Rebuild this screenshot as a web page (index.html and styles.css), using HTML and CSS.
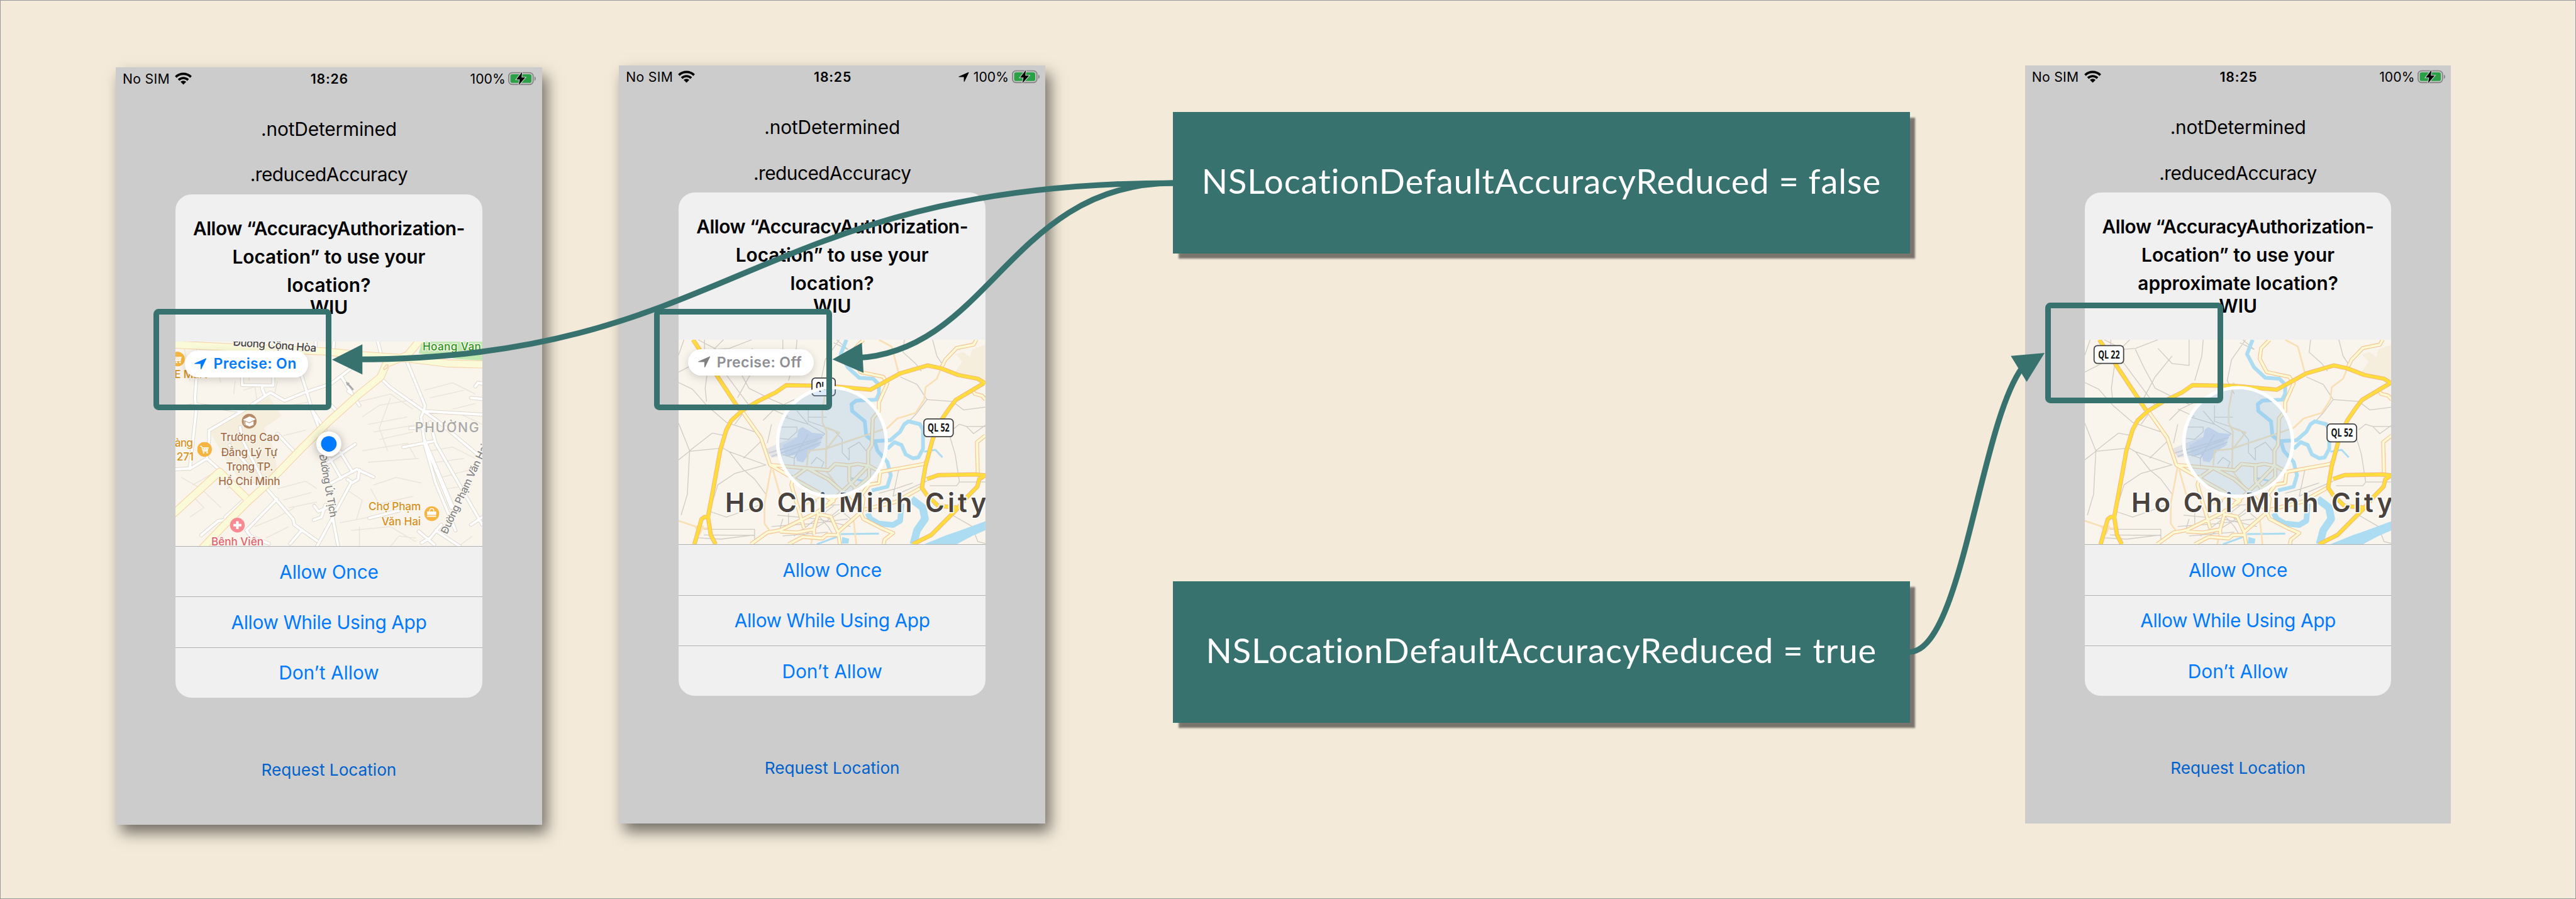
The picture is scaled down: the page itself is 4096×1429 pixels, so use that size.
FILE: index.html
```html
<!DOCTYPE html>
<html lang="en">
<head>
<meta charset="utf-8">
<title>NSLocationDefaultAccuracyReduced</title>
<link rel="stylesheet" href="styles.css">
</head>
<body>
<svg class="defs" aria-hidden="true">
  <defs>
    <symbol id="wifi" viewBox="0 0 30 22">
      <g fill="none" stroke="#000" stroke-width="4">
        <path d="M1.6 8.2A19 19 0 0 1 28.4 8.2"/>
        <path d="M6.6 13.4A12 12 0 0 1 23.4 13.4"/>
      </g>
      <path d="M15 21.5L10 16.6A7.2 7.2 0 0 1 20 16.6Z"/>
    </symbol>
    <symbol id="battery" viewBox="0 0 49 24">
      <rect x="1" y="1.8" width="43" height="20.6" rx="6" fill="none" stroke="#858585" stroke-width="2"/>
      <path d="M46.4 8.4c3 1.2 3 6.4 0 7.6z" fill="#858585"/>
      <rect x="3.9" y="4.5" width="37.2" height="15.2" rx="3.5" fill="#2aa147"/>
      <path d="M24.5 .5L14.5 13.500H20.500L18.500 23.500L30 10.200H23.500Z" fill="#000" stroke="#ccc" stroke-width="2.400" paint-order="stroke"/>
    </symbol>
    <symbol id="nav" viewBox="0 0 22 21">
      <path d="M21 .6C21.800 .3 22 .8 21.700 1.500L12.800 20C12.300 21 11.300 20.800 11.300 19.700V10.800H1.300C.1 10.800 -.1 9.800 1 9.300Z"/>
    </symbol>
    <symbol id="cart" viewBox="-13 -13 26 26">
      <circle r="13" fill="#f6b440"/>
      <path d="M-8-5.500h2.700l2.600 8.500h8.500M-4.500-3h11l-1.500 5h-8M-3.500-.5h9M-.5-3v5M3-3v5" fill="none" stroke="#fff" stroke-width="1.500"/>
      <circle cx="-1.500" cy="5.800" r="1.500" fill="#fff"/><circle cx="4.500" cy="5.800" r="1.500" fill="#fff"/>
    </symbol>

    <g id="city">
      <rect width="540" height="360" fill="#f9f4ec"/>
      <g class="px" transform="scale(.49744 .33333) translate(-231 -114)">
        <path fill="#f5eedd" d="M1317 140L1270 165L1262 205L1240 180L1212 190L1235 230L1210 285L1285 305L1317 330Z"/>
        <path fill="#e4e4e6" d="M540 690L640 630L742 612L735 660L672 735L642 715L560 738Z"/>
        <path fill="#d3dae8" d="M600 672L650 630L655 590L668 575L690 592L705 606L750 612L718 662L735 668L700 700L672 762L650 755L645 722L610 730Z"/>
        <path class="runway" d="M550 712L740 630M560 730L722 645M620 725L735 655M690 612L640 740"/>
        <g class="grey">
          <path d="M323 114V215M300 114L365 165L410 160L490 114M490 160L540 240L600 250V114M410 165L440 260L480 370L560 430L600 455M231 195L250 114M231 285L290 240L330 180M231 340L280 375L330 460L400 550L500 600M390 114L345 180L335 260L325 370L330 440M340 180L480 460L430 560M540 200L480 310L440 420M370 300L400 370M530 540L570 480L640 430M231 555L270 700L350 607L395 620M231 748L270 703L388 686L410 705L540 775L430 820L370 880L340 1020L400 1050L460 1020L530 980M270 703L262 930L240 1040M410 705L460 800L500 850L540 930M460 740L530 640M560 560L545 660M780 130L830 165L790 114M800 114L750 220L735 330L760 400M650 114L645 200L620 330M1030 114L1025 180L1070 240L1090 280M1130 114L1145 200L1165 245M1015 310L1075 350L1110 430L1200 440L1240 485L1317 470M1110 430L1075 500L1050 540M1200 590L1225 560L1250 572H1317M1250 572L1275 610L1317 565M1190 620L1210 720L1225 865H1317M1225 865L1215 885H1120M1010 800L990 940L1110 860M940 925L1000 900L1060 870M320 1115H500V1175M320 1145L500 1147M300 1160L380 1167L500 1145M1200 1040L1270 1100L1290 1180L1317 1190"/>
          <path d="M600 520L690 560L750 612M690 460V545L780 590L810 640L810 710L835 750M690 523H755M590 575H650V600L620 640L590 635M600 720L640 740V780M830 690L870 655L895 700M835 750V690M700 770L720 735L745 760L735 795M560 480L620 520M650 490L690 560"/>
          <path d="M580 1040L720 1060L840 1100M560 1100L700 1085L830 1060M600 1150L760 1130M640 1150L780 990M660 1160L810 1020M700 1000L760 1100L780 1150M620 1000V1090M600 1060L590 1110M740 1000L760 1060L800 1010L840 1060M720 960L700 1020M760 930L735 990L810 985"/>
        </g>
        <g class="water">
          <path stroke-width="6" d="M825 114L805 190L830 260L870 315L920 320L940 350V400L930 430L860 435L843 455L845 490L890 545L895 620L920 650L980 645L1015 600L1030 560L1045 545L1085 560L1096 590V690L1080 735L1060 740L1035 720L1020 670L995 655L970 690"/>
          <path stroke-width="6" d="M925 650L935 700L970 760L982 830L970 890L915 910"/>
          <path stroke-width="12" d="M1055 955L1095 1000L1103 1060L1075 1120L1062 1194"/>
          <path stroke-width="9" d="M1020 980L1015 1070L990 1092L940 1085L910 1060L900 1030"/>
          <path stroke-width="3" d="M805 1140L940 1138M1100 705L1140 695L1165 735M720 1194L800 1150M840 845L885 860"/>
          <path class="fill" d="M1317 1072L1215 1128L1180 1145L1100 1194H1215L1270 1150L1317 1120ZM810 1155L835 1165L832 1190H808Z"/>
        </g>
        <path class="thin" d="M940 114L985 150L1010 290M1160 265L1145 320L1105 365L1100 430L1070 500L1005 530L970 580L750 690L690 700L685 780M758 340L740 480V550L755 600L752 800M745 575L800 605L755 690M560 780L535 980V1085L552 1120M565 800L595 960M231 1070L290 1100L305 1140L315 1110H340M700 1194L712 1100M860 1194L850 1060M750 800L800 900M740 940L660 1000M290 1100H320"/>
        <g>
          <path class="pale-case" d="M455 490L522 630L555 775L680 792L762 803L785 770L835 777L865 770L905 780L945 812L1100 770L1112 750M555 775L630 840L720 915L780 965L715 1030L590 1120L545 1132L487 1194M640 830L630 880L665 1060L675 1110M885 114L855 160L850 215L875 285L955 310L970 345L940 445V490L918 530L915 670L902 700V780L850 860L800 930L760 980M682 795L640 840M690 795L760 850L810 915L870 1010L885 1060L950 1110L990 1135L960 1170L957 1194M835 780V860L885 950L880 1020L795 1130L802 1194M905 790V840L850 910M620 1194L670 1155L740 1163L755 1145H795M590 1127L650 1132L710 1115L725 1035L770 1048L795 1130M945 812L940 870L905 880L880 930M1285 114L1275 140L1215 158L1175 220L1160 265M1317 620L1287 655L1290 830M1090 895L1000 970L890 1010M1270 380L1280 400L1305 410L1317 430M710 1115V1140"/>
          <path class="pale" d="M455 490L522 630L555 775L680 792L762 803L785 770L835 777L865 770L905 780L945 812L1100 770L1112 750M555 775L630 840L720 915L780 965L715 1030L590 1120L545 1132L487 1194M640 830L630 880L665 1060L675 1110M885 114L855 160L850 215L875 285L955 310L970 345L940 445V490L918 530L915 670L902 700V780L850 860L800 930L760 980M682 795L640 840M690 795L760 850L810 915L870 1010L885 1060L950 1110L990 1135L960 1170L957 1194M835 780V860L885 950L880 1020L795 1130L802 1194M905 790V840L850 910M620 1194L670 1155L740 1163L755 1145H795M590 1127L650 1132L710 1115L725 1035L770 1048L795 1130M945 812L940 870L905 880L880 930M1285 114L1275 140L1215 158L1175 220L1160 265M1317 620L1287 655L1290 830M1090 895L1000 970L890 1010M1270 380L1280 400L1305 410L1317 430M710 1115V1140"/>
        </g>
        <path class="major-case" d="M282 114L365 300L447 485M287 1194L312 1062L322 1050H342M362 1194L345 1145L335 1050L360 850L378 700L400 590L418 540L455 490L510 440L575 392L612 354L760 358L910 378L1015 292L1112 250L1160 265L1220 300L1290 320L1317 345M1310 345L1212 432L1190 475L1160 540L1130 640L1105 780L1092 895L1110 935L1150 992L1215 1000M1060 1194L1125 1145L1215 1010L1255 940L1288 890L1295 850L1317 830M1110 850L1150 829L1280 825L1317 830"/>
        <path class="major" d="M282 114L365 300L447 485M287 1194L312 1062L322 1050H342M362 1194L345 1145L335 1050L360 850L378 700L400 590L418 540L455 490L510 440L575 392L612 354L760 358L910 378L1015 292L1112 250L1160 265L1220 300L1290 320L1317 345M1310 345L1212 432L1190 475L1160 540L1130 640L1105 780L1092 895L1110 935L1150 992L1215 1000M1060 1194L1125 1145L1215 1010L1255 940L1288 890L1295 850L1317 830M1110 850L1150 829L1280 825L1317 830"/>
      </g>
    </g>
  </defs>
</svg>

<main class="board">

  <section class="phone phone-on shadowed">
    <header class="status">
      <div class="left"><span class="t-sim">No SIM</span><svg class="wifi"><use href="#wifi"/></svg></div>
      <span class="clock">18:26</span>
      <div class="right"><span class="t-pct">100%</span><svg class="battery"><use href="#battery"/></svg></div>
    </header>
    <p class="label l1">.notDetermined</p>
    <p class="label l2">.reducedAccuracy</p>
    <div class="dialog">
      <div class="title">
        <p class="a1">Allow “AccuracyAuthorization-</p>
        <p class="a2">Location” to use your</p>
        <p class="a3">location?</p>
        <p class="wiu">WIU</p>
      </div>
      <div class="map">
        <svg class="map-art" viewBox="0 0 540 360">
          <rect width="540" height="360" fill="#f9f4ec"/>
          <g class="px" transform="scale(.49744 .33333) translate(-239 -123)">
            <path fill="#f5eedd" d="M570 415L615 515L552 580L590 700L600 830L545 880L470 860L410 730L362 600L470 500Z"/>
            <path fill="#c0e8b0" d="M1112 123H1325V222L1240 215L1100 185Z"/>
            <path class="grey faint" d="M270 160L290 330M330 300L390 290L400 340M450 330L445 400M480 380L520 360L530 460M600 330L590 400M610 470L720 440M890 440L1000 400L1080 480M900 520L960 460L1080 430M920 560L1060 520M940 600L1100 560M960 640L1080 600M1000 420L960 580L990 700M900 700L1060 660L1090 740M920 760L1100 740M940 880L1020 840L1110 870M930 900L960 980L1080 940M840 900L900 960L880 1060M820 1080L960 1040L1080 1100M860 1120L1000 1100L1090 1180M890 1204V1100M260 840L330 900L400 1000M300 880L370 820M420 900L480 860L560 880M600 900L700 860L740 900M620 960L720 920M640 1000L740 970M520 1100L600 1050L660 1000M560 1160L640 1100M1120 380L1220 340L1300 400M1140 420L1260 380M1220 480L1300 450M1240 500L1325 560M1140 700L1220 680L1300 740M1160 760L1260 740M1180 840L1280 800M1200 900L1290 880M1240 1204L1290 1150M300 940L340 1000L290 1050M440 640L420 700M240 470L300 450M620 620L700 590M500 330V300M1000 1204L1030 1150L1090 1160"/>
            <path class="road-case" d="M322 140L308 420L312 490L290 792L239 797M312 455L475 490L358 592V640L350 740L290 795M475 490L575 392L625 435L690 395L790 345L825 305L860 265M395 155V200M418 155V200M475 310V352L585 355V310M548 355L545 370L555 405M685 300L705 395L725 495L750 590M725 490L770 590M790 460L810 490M825 305L890 460M850 385L865 400M735 123V150M955 123L965 180M800 123L798 160M1060 235L1122 460L1118 490L1325 508M965 315L1000 365L1118 490L1108 520L1120 650L1215 1000M1118 490L1165 540L1325 740M1045 680L1150 650M1120 640L1225 1010M1140 550L1160 660L1325 1090M1070 580L1130 575M1120 660L1160 870L1230 1120M780 760L875 665M785 740L825 845M820 700L865 810M790 870L880 797L940 838M890 800L885 850L865 868L848 850M860 870L795 1050L815 1204M350 740L395 800M468 575L475 640L565 905L655 1060L660 1090L740 1175M600 610L660 705M430 670L510 800M598 955L490 1120L505 1150L570 1190M485 955L415 1050V1065L390 1070L330 1145M730 990L745 1020L775 1000M770 985L755 1050L728 1065M925 1055L1030 1015M685 1120L645 1190M800 1040L740 1204M1100 1125L1155 1195M1110 1185L1140 1160L1180 1090M1160 1120L1245 1204M1325 1050L1285 1090M1285 420L1325 425M1300 360L1310 340L1325 345"/>
            <path class="road" d="M322 140L308 420L312 490L290 792L239 797M312 455L475 490L358 592V640L350 740L290 795M475 490L575 392L625 435L690 395L790 345L825 305L860 265M395 155V200M418 155V200M475 310V352L585 355V310M548 355L545 370L555 405M685 300L705 395L725 495L750 590M725 490L770 590M790 460L810 490M825 305L890 460M850 385L865 400M735 123V150M955 123L965 180M800 123L798 160M1060 235L1122 460L1118 490L1325 508M965 315L1000 365L1118 490L1108 520L1120 650L1215 1000M1118 490L1165 540L1325 740M1045 680L1150 650M1120 640L1225 1010M1140 550L1160 660L1325 1090M1070 580L1130 575M1120 660L1160 870L1230 1120M780 760L875 665M785 740L825 845M820 700L865 810M790 870L880 797L940 838M890 800L885 850L865 868L848 850M860 870L795 1050L815 1204M350 740L395 800M468 575L475 640L565 905L655 1060L660 1090L740 1175M600 610L660 705M430 670L510 800M598 955L490 1120L505 1150L570 1190M485 955L415 1050V1065L390 1070L330 1145M730 990L745 1020L775 1000M770 985L755 1050L728 1065M925 1055L1030 1015M685 1120L645 1190M800 1040L740 1204M1100 1125L1155 1195M1110 1185L1140 1160L1180 1090M1160 1120L1245 1204M1325 1050L1285 1090M1285 420L1325 425M1300 360L1310 340L1325 345"/>
            <path class="art-case" d="M230 138L420 152L770 175L900 195L1060 212L1200 238L1335 244M1110 105L1060 195L985 240L965 310L890 400L782 545L690 680L560 880L490 975L400 1110L330 1220M230 1035L395 810L490 950"/>
            <path class="art" d="M230 138L420 152L770 175L900 195L1060 212L1200 238L1335 244M1110 105L1060 195L985 240L965 310L890 400L782 545L690 680L560 880L490 975L400 1110L330 1220M230 1035L395 810L490 950"/>
            <path class="loop" d="M975 265L985 245L992 245L988 262L978 272Z"/>
            <path d="M868 378L848 345" fill="none" stroke="#aaa" stroke-width="3"/>
            <path d="M842 335L856 342L846 356Z" fill="#aaa"/>
          </g>
          <g class="poi">
            <text x="101" y="7" textLength="147" transform="rotate(4.3 101 7)" font-size="19" fill="#444">Đường Cộng Hòa</text>
            <text x="435" y="15" textLength="103" font-size="19" fill="#2f9321">Hoang Van</text>
            <text x="-2" y="64" textLength="58" font-size="19" fill="#d7901b">E Mart</text>
            <g font-size="19" fill="#a5714b">
              <text x="79" y="175.3" textLength="104">Trường Cao</text>
              <text x="80.5" y="201.3" textLength="99">Đẳng Lý Tự</text>
              <text x="89" y="227" textLength="83">Trọng TP.</text>
              <text x="75.5" y="252.7" textLength="109">Hồ Chí Minh</text>
            </g>
            <g font-size="19" fill="#d7901b">
              <text x="-1" y="185" textLength="32">àng</text>
              <text x="2" y="209.7" textLength="30">271</text>
              <text x="340" y="297" textLength="92">Chợ Phạm</text>
              <text x="363" y="323" textLength="69">Văn Hai</text>
            </g>
            <text x="63" y="358.3" textLength="92" font-size="19" fill="#e0626d">Bệnh Viện</text>
            <text x="421.5" y="159" textLength="113" font-size="23.5" fill="#a8a8a5">PHƯỜNG</text>
            <text x="253" y="199" textLength="113" transform="rotate(80 253 199)" font-size="18" fill="#858585">Đường Út Tịch</text>
            <text x="478" y="340" textLength="172" transform="rotate(-65 478 340)" font-size="18" fill="#858585">Đường Phạm Văn Hai</text>
          </g>
          <use href="#cart" x="-9.5" y="17.7" width="26" height="26"/>
          <use href="#cart" x="38.2" y="176.7" width="26" height="26"/>
          <circle cx="129.8" cy="140" r="13" fill="#b58a66"/>
          <path d="M119.5 137.5l11-5.5 10 4.5-10.5 5.5zM123.5 141l6.500 3 7-3.500v6l-6.500 2.500-7-2.500zM121 139v8" fill="#fff" stroke="#fff" stroke-width=".8"/>
          <circle cx="109" cy="323" r="13" fill="#f98a92"/>
          <path d="M109 316v14M102 323h14" stroke="#fff" stroke-width="4.5"/>
          <circle cx="451.2" cy="302.7" r="13" fill="#f6b440"/>
          <path d="M443 299h16v6h-16zM443 306.3h16v2h-16z" fill="#fff"/>
          <path d="M447.5 299v-1.500a3.700 3.700 0 0 1 7.400 0v1.500" fill="none" stroke="#fff" stroke-width="1.5"/>
          <circle class="dot" cx="270" cy="180" r="22" fill="#fff"/>
          <circle cx="270" cy="180" r="13.7" fill="#007aff"/>
        </svg>
        <div class="pill on"><svg class="nav"><use href="#nav"/></svg><span class="t-on">Precise: On</span></div>
      </div>
      <button class="b1">Allow Once</button>
      <button class="b2">Allow While Using App</button>
      <button class="b3">Don’t Allow</button>
    </div>
    <p class="request">Request Location</p>
  </section>

  <section class="phone phone-off shadowed">
    <header class="status">
      <div class="left"><span class="t-sim">No SIM</span><svg class="wifi"><use href="#wifi"/></svg></div>
      <span class="clock">18:25</span>
      <div class="right"><svg class="nav small"><use href="#nav"/></svg><span class="t-pct">100%</span><svg class="battery"><use href="#battery"/></svg></div>
    </header>
    <p class="label l1">.notDetermined</p>
    <p class="label l2">.reducedAccuracy</p>
    <div class="dialog">
      <div class="title">
        <p class="a1">Allow “AccuracyAuthorization-</p>
        <p class="a2">Location” to use your</p>
        <p class="a3">location?</p>
        <p class="wiu">WIU</p>
      </div>
      <div class="map">
        <svg class="map-art" viewBox="0 0 540 360">
          <use href="#city"/>
          <g class="shield">
            <rect x="234.8" y="67.3" width="41" height="31.4" rx="6"/>
            <text x="241.5" y="88.5" textLength="28" lengthAdjust="spacingAndGlyphs">QL 1</text>
            <rect x="431.8" y="139.3" width="51.7" height="31.4" rx="6"/>
            <text x="438.5" y="161.7" textLength="38.5" lengthAdjust="spacingAndGlyphs">QL 52</text>
          </g>
          <text class="city-name" x="82" y="303.7" textLength="460">Ho Chi Minh City</text>
          <circle class="area" cx="270" cy="180" r="95.7"/>
        </svg>
        <div class="pill off"><svg class="nav"><use href="#nav"/></svg><span class="t-off">Precise: Off</span></div>
      </div>
      <button class="b1">Allow Once</button>
      <button class="b2">Allow While Using App</button>
      <button class="b3">Don’t Allow</button>
    </div>
    <p class="request">Request Location</p>
  </section>

  <section class="phone phone-reduced">
    <header class="status">
      <div class="left"><span class="t-sim">No SIM</span><svg class="wifi"><use href="#wifi"/></svg></div>
      <span class="clock">18:25</span>
      <div class="right"><span class="t-pct">100%</span><svg class="battery"><use href="#battery"/></svg></div>
    </header>
    <p class="label l1">.notDetermined</p>
    <p class="label l2">.reducedAccuracy</p>
    <div class="dialog">
      <div class="title">
        <p class="a1">Allow “AccuracyAuthorization-</p>
        <p class="a2">Location” to use your</p>
        <p class="a4">approximate location?</p>
        <p class="wiu">WIU</p>
      </div>
      <div class="map">
        <svg class="map-art" viewBox="0 0 540 360">
          <use href="#city"/>
          <g class="shield">
            <rect x="16.3" y="10.3" width="52" height="31.4" rx="6"/>
            <text x="23.5" y="32.7" textLength="38" lengthAdjust="spacingAndGlyphs">QL 22</text>
            <rect x="426.5" y="148.3" width="52" height="31.4" rx="6"/>
            <text x="433.5" y="170.7" textLength="38.5" lengthAdjust="spacingAndGlyphs">QL 52</text>
          </g>
          <text class="city-name" x="82" y="303.7" textLength="460">Ho Chi Minh City</text>
          <circle class="area" cx="270" cy="180" r="95.7"/>
        </svg>
      </div>
      <button class="b1">Allow Once</button>
      <button class="b2">Allow While Using App</button>
      <button class="b3">Don’t Allow</button>
    </div>
    <p class="request">Request Location</p>
  </section>

  <div class="callout false">NSLocationDefaultAccuracyReduced = false</div>
  <div class="callout true">NSLocationDefaultAccuracyReduced = true</div>

  <div class="mark m1"></div>
  <div class="mark m2"></div>
  <div class="mark m3"></div>

  <svg class="arrows" viewBox="0 0 4535 1582">
    <g fill="none" stroke="#38726e" stroke-width="10">
      <path d="M2066 322C1327 322 1290 633 625 632.5"/>
      <path d="M2066 322C1780 322 1742 618 1508 630"/>
      <path d="M3361 1147.4C3454 1147.4 3485 749 3560 647"/>
    </g>
    <g fill="#38726e">
      <path d="M584.5 633L638 605.7V659Z"/>
      <path d="M1465.5 632.3L1517.3 603L1520.3 656.3Z"/>
      <path d="M3599.5 621L3540 626.3L3568 672Z"/>
    </g>
  </svg>
</main>
</body>
</html>
```
FILE: styles.css
```css
/* 1rem = 10 design units on a 4535-unit-wide board */
html { font-size: 9.03197px; }
* { box-sizing: border-box; }
body { margin: 0; font-family: Inter, "Noto Sans", sans-serif; overflow: hidden; }
p { margin: 0; }
svg { display: block; }
.defs { position: absolute; width: 0; height: 0; }

.board {
  position: relative;
  width: 4096px;
  height: 1429px;
  background: #f3ead9;
  border: 1px solid #999;
  overflow: hidden;
}

/* phones */
.phone {
  position: absolute;
  width: 75rem;
  height: 133.4rem;
  background: #ccc;
  color: #000;
  display: flex;
  flex-direction: column;
  align-items: center;
}
.shadowed { box-shadow: .9rem 1.4rem 2.4rem rgba(0, 0, 0, .52); }
.phone-on { left: calc(20.4rem - 1px); top: calc(11.8rem - 1px); }
.phone-off { left: calc(109rem - 1px); top: calc(11.5rem - 1px); }
.phone-reduced { left: calc(356.5rem - 1px); top: calc(11.5rem - 1px); }

.status {
  width: 100%;
  height: 4.05rem;
  padding: 0 1rem 0 1.2rem;
  display: grid;
  grid-template-columns: 1fr auto 1fr;
  align-items: center;
  font-size: 2.35rem;
}
.left, .right { display: flex; align-items: center; }
.left { gap: .9rem; }
.right { justify-content: flex-end; gap: .5rem; }
.t-sim { letter-spacing: .03rem; }
.clock { font-weight: 600; letter-spacing: .09rem; }
.wifi { width: 3rem; height: 2.2rem; }
.battery { width: 4.9rem; height: 2.4rem; }
.nav { width: 2.15rem; height: 2.05rem; fill: currentColor; }
.nav.small { width: 1.85rem; height: 1.85rem; margin-right: .3rem; }

.label { font-size: 3.3rem; line-height: 4rem; }
.l1 { margin-top: 4.85rem; letter-spacing: -.015rem; }
.l2 { margin: 4.03rem 0 1.47rem; letter-spacing: -.055rem; }

.dialog {
  width: 54rem;
  height: 88.6rem;
  border-radius: 2.8rem;
  background: #f0f0f0;
  overflow: hidden;
  display: flex;
  flex-direction: column;
}
.title {
  height: 25.9rem;
  padding-top: 3.55rem;
  text-align: center;
  font-size: 3.3rem;
  font-weight: 600;
  line-height: 4.96rem;
  white-space: nowrap;
}
.a1 { letter-spacing: -.047rem; }
.a3 { letter-spacing: .02rem; }
.wiu { line-height: 2.95rem; }
.map { position: relative; width: 54rem; height: 36rem; overflow: hidden; }
.map-art { width: 54rem; height: 36rem; font-family: Inter, "Noto Sans", sans-serif; }

.dialog button {
  height: 8.9rem;
  border: 0;
  border-top: 1px solid #b0b0b0;
  padding: 0;
  background: none;
  color: #007aff;
  font: 400 3.3rem/4rem Inter, sans-serif;
}
.dialog .b1 { letter-spacing: -.03rem; }
.dialog .b2 { letter-spacing: -.042rem; }
.request { margin-top: 10.7rem; font-size: 2.9rem; line-height: 4rem; color: #0062cc; }

.pill {
  position: absolute;
  left: 1.6rem;
  top: 1.6rem;
  height: 4.7rem;
  border-radius: 2.35rem;
  background: #fff;
  box-shadow: 0 .4rem 1.4rem rgba(0, 0, 0, .16);
  display: flex;
  align-items: center;
  gap: 1.2rem;
  padding-left: 1.75rem;
  font-size: 2.55rem;
  font-weight: 600;
  white-space: nowrap;
}
.pill.on { width: 21.8rem; color: #007aff; letter-spacing: .045rem; }
.pill.off { width: 22.2rem; color: #8e8e93; letter-spacing: .045rem; }
.pill.off .nav { fill: #808080; }

/* map layers; stroke widths stay in screen pixels */
.px path { vector-effect: non-scaling-stroke; stroke-linejoin: round; }
.grey { fill: none; stroke: #cfcbc4; stroke-width: 1.3; }
.faint { stroke: #e9e3d9; }
.runway { fill: none; stroke: #c9ced8; stroke-width: 2; }
.water { fill: none; stroke: #abdcf2; }
.water .fill { fill: #abdcf2; stroke: none; }
.thin { fill: none; stroke: #f8dfb4; stroke-width: 2.6; }
.pale-case { fill: none; stroke: #f5c694; stroke-width: 6.2; }
.pale { fill: none; stroke: #fcf9d4; stroke-width: 3.8; }
.major-case { fill: none; stroke: #f6b978; stroke-width: 6.8; }
.major { fill: none; stroke: #ffdd3c; stroke-width: 4.8; }
.road-case { fill: none; stroke: #dfd8ce; stroke-width: 6; stroke-linecap: round; }
.road { fill: none; stroke: #fff; stroke-width: 4; stroke-linecap: round; }
.art-case { fill: none; stroke: #f6d3a8; stroke-width: 12.6; }
.art { fill: none; stroke: #fbfad8; stroke-width: 10.4; }
.loop { fill: #f9f4ec; stroke: #f3cda0; stroke-width: 1.2; }
.poi text { font-weight: 500; stroke: #fbf8f2; stroke-width: 3; paint-order: stroke; stroke-linejoin: round; }
.dot { filter: drop-shadow(0 2px 8px rgba(0, 0, 0, .3)); }
.shield rect { fill: #fff; stroke: #444; stroke-width: 2; }
.shield text { font: 700 19px "Open Sans", sans-serif; fill: #111; }
.city-name { font-size: 46.5px; font-weight: 600; fill: #4a423c; stroke: #fff; stroke-width: 4; paint-order: stroke; stroke-linejoin: round; }
.area { fill: rgba(135, 185, 235, .28); stroke: #fff; stroke-width: 6; }

/* callouts and overlays */
.callout {
  position: absolute;
  left: calc(206.5rem - 1px);
  width: 129.7rem;
  height: 24.9rem;
  padding-bottom: .7rem;
  background: #38726e;
  box-shadow: 1rem 1rem .3rem rgba(0, 0, 0, .5);
  color: #fff;
  font: 400 6rem/1.2 Lato, sans-serif;
  font-variant-ligatures: none;
  letter-spacing: .105rem;
  display: flex;
  align-items: center;
  justify-content: center;
  white-space: nowrap;
}
.callout.false { top: calc(19.7rem - 1px); }
.callout.true { top: calc(102.3rem - 1px); }

.mark {
  position: absolute;
  width: 31.4rem;
  height: 17.8rem;
  border: 1rem solid #38726e;
  border-radius: .9rem;
}
.m1 { left: calc(27rem - 1px); top: calc(54.4rem - 1px); }
.m2 { left: calc(115.1rem - 1px); top: calc(54.4rem - 1px); }
.m3 { left: calc(360rem - 1px); top: calc(53.2rem - 1px); }

.arrows { position: absolute; left: -1px; top: -1px; width: 4096px; height: 1429px; }
```
